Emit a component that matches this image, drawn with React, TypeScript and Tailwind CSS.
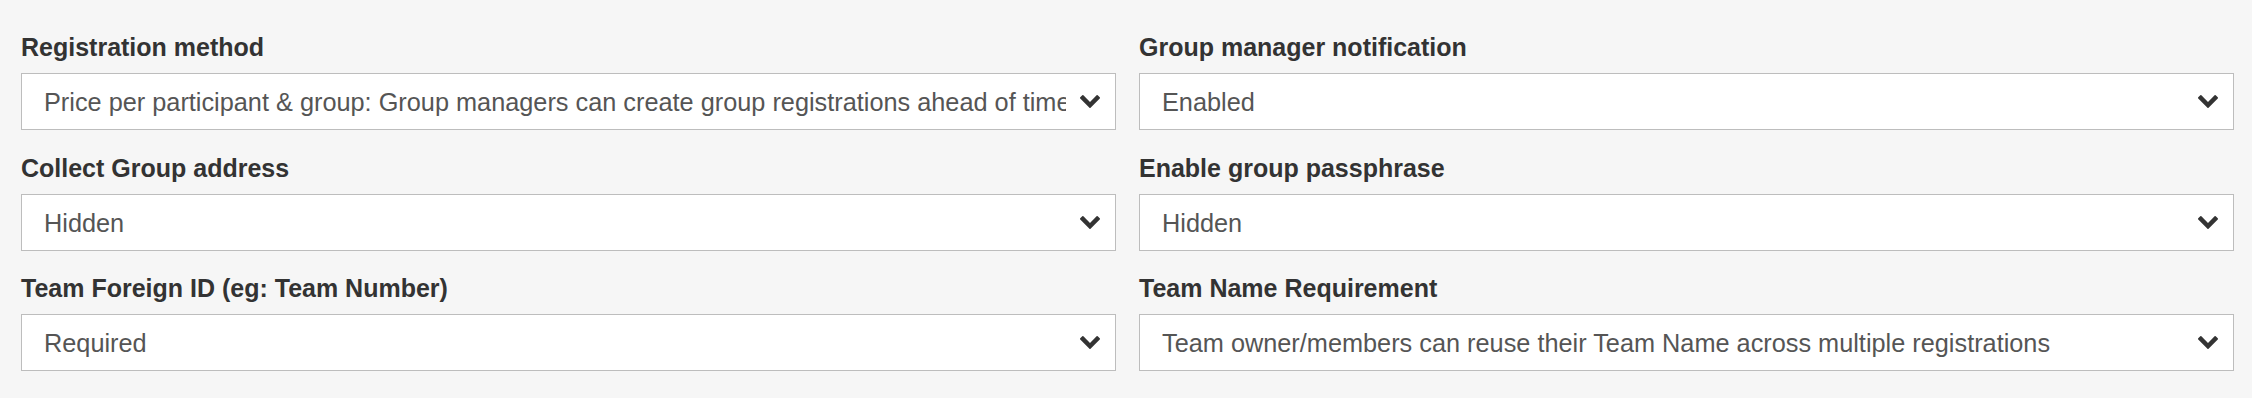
import React from "react";

const fields = [
    { label: "Registration method", value: "Price per participant & group: Group managers can create group registrations ahead of time" },
    { label: "Group manager notification", value: "Enabled" },
    { label: "Collect Group address", value: "Hidden" },
    { label: "Enable group passphrase", value: "Hidden" },
    { label: "Team Foreign ID (eg: Team Number)", value: "Required" },
    { label: "Team Name Requirement", value: "Team owner/members can reuse their Team Name across multiple registrations" },
];

const Chevron = () => (
    <svg className="w-[20px] h-[13px] shrink-0 text-[#333]" viewBox="90 533 1612 1035">
        <path
            fill="currentColor"
            d="M1683 808l-742 741q-19 19-45 19t-45-19l-742-741q-19-19-19-45.5t19-45.5l166-165q19-19 45-19t45 19l531 531 531-531q19-19 45-19t45 19l166 165q19 19 19 45.5t-19 45.5z"
        />
    </svg>
);

const SelectField = ({ label, value }: { label: string; value: string }) => (
    <div className="flex flex-col">
        <label className="h-[30px] leading-[30px] text-[25px] font-bold text-[#333] mb-[11px] whitespace-nowrap">{label}</label>
        <div className="flex items-center h-[57px] box-border border border-[#bdbdbd] bg-white pl-[22px] pr-[15px] cursor-pointer">
            <span className="flex-1 min-w-0 overflow-hidden whitespace-nowrap text-[25.3px] leading-[53px] pt-[2px] text-[#555]">{value}</span>
            <span className="ml-[14px] flex items-center">
                <Chevron />
            </span>
        </div>
    </div>
);

export default function App() {
    return (
        <div className="min-h-screen bg-[#f6f6f6] pl-[21px] pr-[18px] pt-[32px] pb-[20px] font-['Liberation_Sans',Arial,Helvetica,sans-serif]">
            <div className="grid grid-cols-2 gap-x-[23px] gap-y-[22.5px]">
                {fields.map((f) => (
                    <SelectField key={f.label} label={f.label} value={f.value} />
                ))}
            </div>
        </div>
    );
}
